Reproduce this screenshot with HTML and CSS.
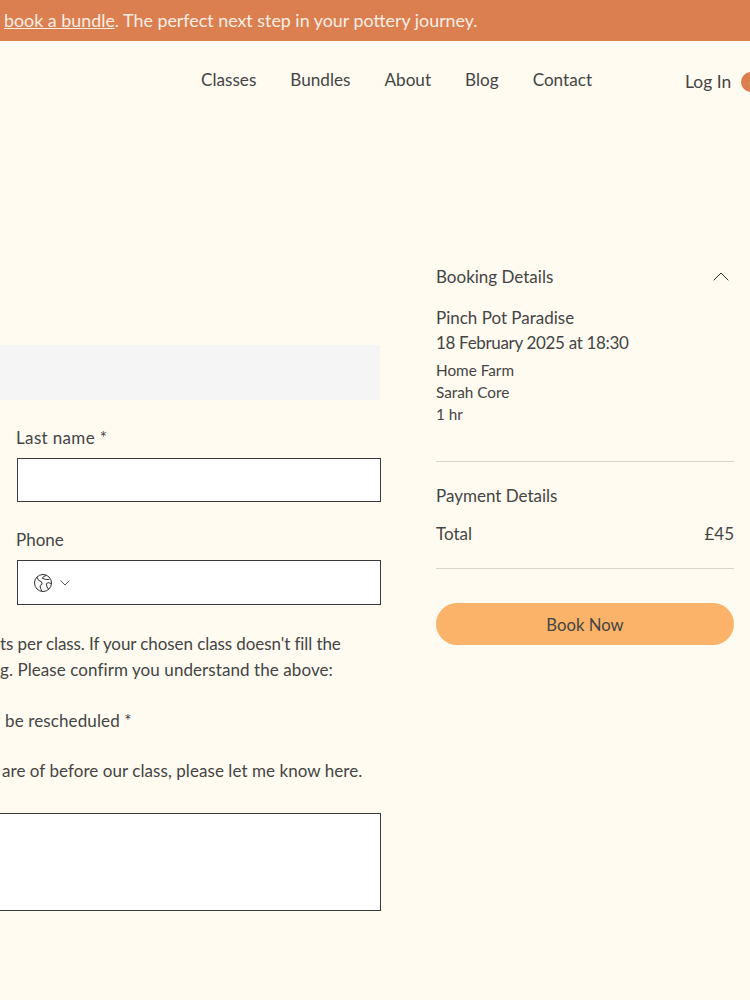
FILE: index.html
```html
<!DOCTYPE html>
<html lang="en">
<head>
  <meta charset="UTF-8">
  <title>Booking Form</title>
  <link rel="stylesheet" href="styles.css">
</head>
<body>

  <div class="banner"><a href="#">book a bundle</a>. The perfect next step in your pottery journey.</div>

  <div class="site-header">
    <nav class="nav">
      <a href="#">Classes</a>
      <a href="#">Bundles</a>
      <a href="#">About</a>
      <a href="#">Blog</a>
      <a href="#">Contact</a>
    </nav>
    <div class="login">
      <span>Log In</span>
      <span class="avatar"></span>
    </div>
  </div>

  <div class="main">
    <div class="form-col">
      <div class="form-strip"></div>

      <label class="field-label">Last name *</label>
      <div class="input"></div>

      <label class="field-label phone-label">Phone</label>
      <div class="input phone-input">
        <svg class="globe" width="20" height="20" viewBox="0 0 20 20" fill="none" stroke="#333" stroke-width="1">
          <circle cx="10" cy="10" r="8.5"/>
          <path d="M4 4.2l1.5 3 3 1.6.6 2.400-2 1.400.4 2.600 1.400 2.900"/>
          <path d="M13.500 2.300l-3.200 1.400-.9 1.600 3.800 1.300 3.200-.2"/>
          <path d="M18.200 10.500l-3-.9-2 1.300.8 3 1.600 2.500"/>
        </svg>
        <svg class="chevron" width="10" height="6" viewBox="0 0 10 6" fill="none" stroke="#555" stroke-width="1">
          <path d="M.5.5L5 5 9.500.5"/>
        </svg>
      </div>

      <p class="note first">ts per class. If your chosen class doesn't fill the</p>
      <p class="note second">g. Please confirm you understand the above:</p>
      <p class="note check">be rescheduled *</p>
      <p class="note aware">are of before our class, please let me know here.</p>
      <div class="textarea"></div>
    </div>

    <div class="summary">
      <div class="summary-head">
        <span>Booking Details</span>
        <svg width="16" height="9" viewBox="0 0 16 9" fill="none" stroke="#333" stroke-width="1">
          <path d="M.7 8.300L8 1l7.300 7.300"/>
        </svg>
      </div>
      <div class="class-name">Pinch Pot Paradise</div>
      <div class="class-name class-date">18 February 2025 at 18:30</div>
      <div class="class-meta first">Home Farm</div>
      <div class="class-meta">Sarah Core</div>
      <div class="class-meta">1 hr</div>

      <hr class="rule rule-top">

      <div class="pay-title">Payment Details</div>
      <div class="total">
        <span>Total</span>
        <span>£45</span>
      </div>

      <hr class="rule rule-bottom">

      <button class="book-btn">Book Now</button>
    </div>
  </div>

</body>
</html>
```

FILE: styles.css
```css
:root {
  --bg: #fffbf0;
  --text: #444;
  --banner: #db7f50;
  --accent: #fbb369;
  --rule: #d8d6cc;
  --field: #3a3a3a;
}

html, body {
  overflow: hidden;
}

body {
  margin: 0;
  height: 1000px;
  font-family: "Lato", "Liberation Sans", sans-serif;
  background: var(--bg);
  color: var(--text);
  font-size: 17px;
}

.banner {
  height: 41px;
  line-height: 40px;
  padding-left: 4px;
  background: var(--banner);
  color: #fdeee4;
  white-space: nowrap;
  font-size: 17.85px;
}

.banner a {
  color: inherit;
}

.site-header {
  display: flex;
  height: 80px;
  padding-left: 201px;
  white-space: nowrap;
}

.nav {
  display: flex;
  gap: 34px;
  padding-top: 29px;
  line-height: 20px;
  font-size: 17.15px;
}

.nav a {
  color: var(--text);
  text-decoration: none;
}

.login {
  display: flex;
  align-items: center;
  gap: 10px;
  margin-left: 93px;
  height: 20px;
  margin-top: 31px;
  line-height: 20px;
  font-size: 17.4px;
}

.avatar {
  width: 20px;
  height: 20px;
  flex-shrink: 0;
  border-radius: 50%;
  background: radial-gradient(circle at 60% 55%, #eaa884 0 3px, var(--banner) 4px);
}

.main {
  display: flex;
  gap: 55px;
  align-items: flex-start;
}

.form-col {
  width: 381px;
  flex-shrink: 0;
  padding-top: 224px;
  white-space: nowrap;
}

.form-strip {
  width: 380px;
  height: 55px;
  background: #f5f5f5;
}

.field-label {
  display: block;
  margin: 27px 0 10px 16px;
  line-height: 21px;
  letter-spacing: 0.35px;
}

.phone-label {
  margin-top: 27px;
  margin-bottom: 10px;
  letter-spacing: 0;
}

.input {
  box-sizing: border-box;
  height: 44px;
  margin-left: 17px;
  border: 1px solid var(--field);
  background: #fff;
}

.phone-input {
  height: 45px;
  display: flex;
  align-items: center;
  gap: 7px;
  padding-left: 15px;
}

.globe {
  flex-shrink: 0;
}

.note {
  margin: 0;
  line-height: 26px;
}

.note.first {
  margin-top: 26px;
  letter-spacing: -0.08px;
}

.note.second {
  letter-spacing: 0.08px;
}

.note.check {
  margin-top: 25px;
  margin-left: 5px;
  letter-spacing: 0.12px;
}

.note.aware {
  margin-top: 24px;
  margin-left: 2px;
  letter-spacing: 0.06px;
}

.textarea {
  box-sizing: border-box;
  height: 98px;
  margin-top: 29px;
  border: 1px solid var(--field);
  border-left: 0;
  background: #fff;
}

.summary {
  width: 298px;
  flex-shrink: 0;
  padding-top: 144px;
}

.summary-head {
  display: flex;
  justify-content: space-between;
  align-items: center;
  height: 22px;
  padding-right: 5px;
  margin-bottom: 18px;
}

.class-name {
  line-height: 25px;
}

.class-date {
  letter-spacing: -0.33px;
}

.class-meta {
  font-size: 15.3px;
  line-height: 22px;
}

.class-meta.first {
  margin-top: 4px;
}

.rule {
  height: 1px;
  margin: 0;
  border: 0;
  background: var(--rule);
}

.rule-top {
  margin-top: 36px;
}

.pay-title {
  margin-top: 23px;
  line-height: 22px;
}

.total {
  display: flex;
  justify-content: space-between;
  margin-top: 16px;
  line-height: 22px;
}

.rule-bottom {
  margin-top: 23px;
}

.book-btn {
  display: block;
  width: 100%;
  height: 42px;
  margin-top: 34px;
  padding-top: 2px;
  border: 0;
  border-radius: 21px;
  background: var(--accent);
  color: var(--text);
  font: inherit;
  font-size: 16.7px;
}
```
